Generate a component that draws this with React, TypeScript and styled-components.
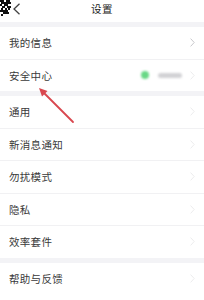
import React from 'react';
import styled, { createGlobalStyle } from 'styled-components';

const GlobalStyle = createGlobalStyle`
  html, body {
    margin: 0;
    padding: 0;
    background: #ffffff;
  }
  body {
    font-family: "Noto Sans CJK SC", "Noto Sans", sans-serif;
  }
`;

const Screen = styled.div`
  position: relative;
  width: 204px;
  height: 300px;
  overflow: hidden;
  background: #f3f3f6;
  display: flex;
  flex-direction: column;
`;

const Header = styled.div`
  position: relative;
  height: 22px;
  flex-shrink: 0;
  background: #ffffff;
  display: flex;
  align-items: center;
  justify-content: center;
`;

const BackButton = styled.div`
  position: absolute;
  left: 12px;
  top: 3px;
  width: 9px;
  height: 12px;
  display: flex;
`;

const Noise = styled.div`
  position: absolute;
  left: 0;
  top: 0;
  width: 11px;
  height: 16px;
  display: flex;
`;

const Title = styled.div`
  font-size: 10.5px;
  color: #222;
  margin-top: -6px;
  letter-spacing: 0.5px;
`;

const Group = styled.div<{ $gap: number; $fill?: boolean }>`
  background: #ffffff;
  margin-top: ${(p) => p.$gap}px;
  flex: ${(p) => (p.$fill ? '1 0 auto' : '0 0 auto')};
`;

const Row = styled.div`
  position: relative;
  height: 31.5px;
  display: flex;
  align-items: center;
  padding: 0 9px;

  & + & {
    border-top: 1px solid #f1f1f3;
  }
`;

const Label = styled.div`
  flex: 1;
  font-size: 10.5px;
  color: #3a3a3a;
  letter-spacing: 0.3px;
`;

const Extra = styled.div`
  display: flex;
  align-items: center;
  gap: 9px;
  margin-right: 8px;
`;

const Dot = styled.div`
  width: 8px;
  height: 8px;
  border-radius: 50%;
  background: #69d886;
  filter: blur(0.8px);
`;

const BlurText = styled.div`
  width: 24px;
  height: 5px;
  border-radius: 3px;
  background: #d2d2d5;
  filter: blur(1.2px);
`;

const Chevron = styled.div<{ $strong?: boolean }>`
  width: 5px;
  height: 9px;
  display: flex;
  opacity: ${(p) => (p.$strong ? 1 : 0.35)};
`;

const Arrow = styled.svg`
  position: absolute;
  left: 0;
  top: 0;
  pointer-events: none;
`;

const ChevronIcon = () => (
  <svg width="5" height="9" viewBox="0 0 5 9">
    <path d="M0.6 0.6 L4.2 4.5 L0.6 8.4" fill="none" stroke="#c8c8cc" strokeWidth="1" />
  </svg>
);

const groups = [
  { gap: 5, items: ['我的信息', '安全中心'] },
  { gap: 5, items: ['通用', '新消息通知', '勿扰模式', '隐私', '效率套件'] },
  { gap: 5, items: ['帮助与反馈'] },
];

const noiseCells = [
  [0, 0], [2, 0], [6, 0], [8, 0], [1, 2], [3, 2], [5, 2], [7, 2], [9, 2],
  [0, 4], [4, 4], [6, 4], [2, 6], [3, 6], [7, 6], [9, 6], [1, 8], [5, 8],
  [8, 8], [0, 10], [2, 10], [4, 10], [6, 10], [3, 12], [5, 12], [1, 14], [7, 12],
];

export default function App() {
  return (
    <>
      <GlobalStyle />
      <Screen>
        <Header>
          <Noise>
            <svg width="11" height="16" viewBox="0 0 11 16">
              {noiseCells.map(([x, y], i) => (
                <rect key={i} x={x} y={y} width="2" height="2" fill="#111" />
              ))}
            </svg>
          </Noise>
          <BackButton>
            <svg width="9" height="12" viewBox="0 0 9 12">
              <path d="M7.5 0.8 L2 6 L7.5 11.2" fill="none" stroke="#444" strokeWidth="1.3" />
            </svg>
          </BackButton>
          <Title>设置</Title>
        </Header>
        {groups.map((g, gi) => (
          <Group key={g.items[0]} $gap={g.gap} $fill={gi === groups.length - 1}>
            {g.items.map((name) => (
              <Row key={name}>
                <Label>{name}</Label>
                {name === '安全中心' && (
                  <Extra>
                    <Dot />
                    <BlurText />
                  </Extra>
                )}
                <Chevron $strong={name === '我的信息'}>
                  <ChevronIcon />
                </Chevron>
              </Row>
            ))}
          </Group>
        ))}
        <Arrow width="204" height="300" viewBox="0 0 204 300">
          <line x1="73" y1="122" x2="43" y2="92" stroke="#d9474f" strokeWidth="1.8" strokeLinecap="round" />
          <path d="M39 88 L47.5 91 L42 96.5 Z" fill="#d9474f" />
        </Arrow>
      </Screen>
    </>
  );
}
